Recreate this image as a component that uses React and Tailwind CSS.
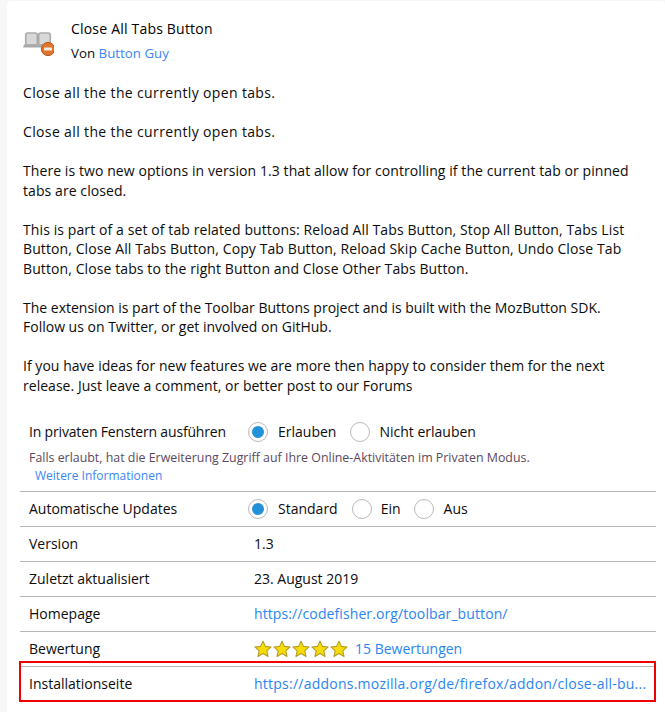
import React from "react";

const FONT = "font-['Open_Sans','Noto_Sans',sans-serif]";

function AddonIcon() {
  return (
    <svg width="34" height="32" viewBox="0 0 34 32" className="shrink-0">
      {/* two pages and the base of the tab shape */}
      <rect x="5.7" y="8" width="11.6" height="12" rx="2" fill="#d8d8d8" stroke="#aaaaaa" strokeWidth="1.6" />
      <rect x="18.7" y="8" width="11.6" height="12" rx="2" fill="#d8d8d8" stroke="#aaaaaa" strokeWidth="1.6" />
      <path d="M4 19.5 H32 L33 22.5 H3 Z" fill="#a9a9a9" />
      <circle cx="28" cy="24" r="6.6" fill="#e0752c" stroke="#b9561a" strokeWidth="1" />
      <rect x="24" y="22.5" width="8" height="3" rx="0.6" fill="#f8ece3" />
    </svg>
  );
}

function Radio({ checked }) {
  return (
    <span className="flex h-[20px] w-[20px] shrink-0 items-center justify-center rounded-full border border-[#b9b9bb] bg-white">
      {checked && <span className="block h-[12px] w-[12px] rounded-full bg-[#2291d8]" />}
    </span>
  );
}

function Star() {
  return (
    <svg width="18" height="18" viewBox="0 0 24 24">
      <path
        d="M12 1.5l3.2 7 7.6.8-5.7 5.1 1.6 7.5L12 18.1l-6.7 3.8 1.6-7.5L1.2 9.3l7.6-.8z"
        fill="#f7dc0c"
        stroke="#b39a22"
        strokeWidth="1.4"
        strokeLinejoin="round"
      />
    </svg>
  );
}

function Row({ label, children }) {
  return (
    <div className="flex h-[35px] items-center border-t border-[#b6b6b6] px-[9px]">
      <div className="w-[225px] shrink-0">{label}</div>
      <div className="flex min-w-0 flex-1 items-center">{children}</div>
    </div>
  );
}

export default function App() {
  return (
    <div className={`${FONT} h-[712px] w-[665px] overflow-hidden bg-[#f7f7f8] pl-[7px] pt-[1px] text-[14px] leading-[19.5px] text-[#0c0c0d]`}>
      <div className="h-full rounded-t-[4px] bg-white pl-[13px] pr-[9px] pt-[18px]">
        <div className="flex items-center">
          <AddonIcon />
          <div className="ml-[17px]">
            <div className="text-[14px] font-medium leading-[20px] tracking-[0.2px] text-black">Close All Tabs Button</div>
            <div className="mt-[5px] text-[13.3px] leading-[18px]">
              Von <span className="text-[#3b86f5]">Button Guy</span>
            </div>
          </div>
        </div>

        <div className="mt-[21px] pl-[3px] pr-[18px]">
          <p className="mb-[19.5px] tracking-[0.36px]">Close all the the currently open tabs.</p>
          <p className="mb-[19.5px] tracking-[0.36px]">Close all the the currently open tabs.</p>
          <p className="mb-[19.5px] tracking-[0.08px]">
            There is two new options in version 1.3 that allow for controlling if the current tab or pinned tabs are closed.
          </p>
          <p className="mb-[19.5px] tracking-[0.1px]">
            This is part of a set of tab related buttons: Reload All Tabs Button, Stop All Button, Tabs List Button, Close All Tabs Button, Copy Tab Button, Reload Skip Cache Button, Undo Close Tab Button, Close tabs to the right Button and Close Other Tabs Button.
          </p>
          <p className="mb-[19.5px]">
            The extension is part of the Toolbar Buttons project and is built with the MozButton SDK. Follow us on Twitter, or get involved on GitHub.
          </p>
          <p className="mb-[19.5px] tracking-[0.03px]">
            If you have ideas for new features we are more then happy to consider them for the next release. Just leave a comment, or better post to our Forums
          </p>
        </div>

        <div>
          <div className="flex h-[33px] items-center px-[9px] pt-[2px]">
            <div className="w-[219px] shrink-0 tracking-[-0.17px]">In privaten Fenstern ausführen</div>
            <Radio checked />
            <span className="ml-[10px]">Erlauben</span>
            <span className="ml-[14px]"><Radio /></span>
            <span className="ml-[9px]">Nicht erlauben</span>
          </div>
          <div className="px-[9px] pb-[6px] pt-[1px] text-[12px] leading-[18px] text-[#5a4a60]">
            <div className="text-[12.4px]">Falls erlaubt, hat die Erweiterung Zugriff auf Ihre Online-Aktivitäten im Privaten Modus.</div>
            <div className="pl-[6px] text-[#3b86f5]">Weitere Informationen</div>
          </div>

          <Row label="Automatische Updates">
            <span className="-ml-[6px]"><Radio checked /></span>
            <span className="ml-[10px]">Standard</span>
            <span className="ml-[14px]"><Radio /></span>
            <span className="ml-[9px]">Ein</span>
            <span className="ml-[13px]"><Radio /></span>
            <span className="ml-[10px]">Aus</span>
          </Row>
          <Row label="Version">1.3</Row>
          <Row label="Zuletzt aktualisiert">23. August 2019</Row>
          <Row label="Homepage">
            <span className="tracking-[0.1px] text-[#2a86f0]">https://codefisher.org/toolbar_button/</span>
          </Row>
          <Row label="Bewertung">
            <span className="flex gap-[1px]"><Star /><Star /><Star /><Star /><Star /></span>
            <span className="ml-[7px] text-[#2a86f0]">15 Bewertungen</span>
          </Row>
          <div className="relative">
            <Row label="Installationseite">
              <span className="tracking-[0.24px] text-[#2a86f0]">https://addons.mozilla.org/de/firefox/addon/close-all-bu...</span>
            </Row>
            <div className="pointer-events-none absolute -left-[1px] -top-[5px] h-[41px] w-[637px] border-2 border-[#f00000]" />
          </div>
        </div>
      </div>
    </div>
  );
}
